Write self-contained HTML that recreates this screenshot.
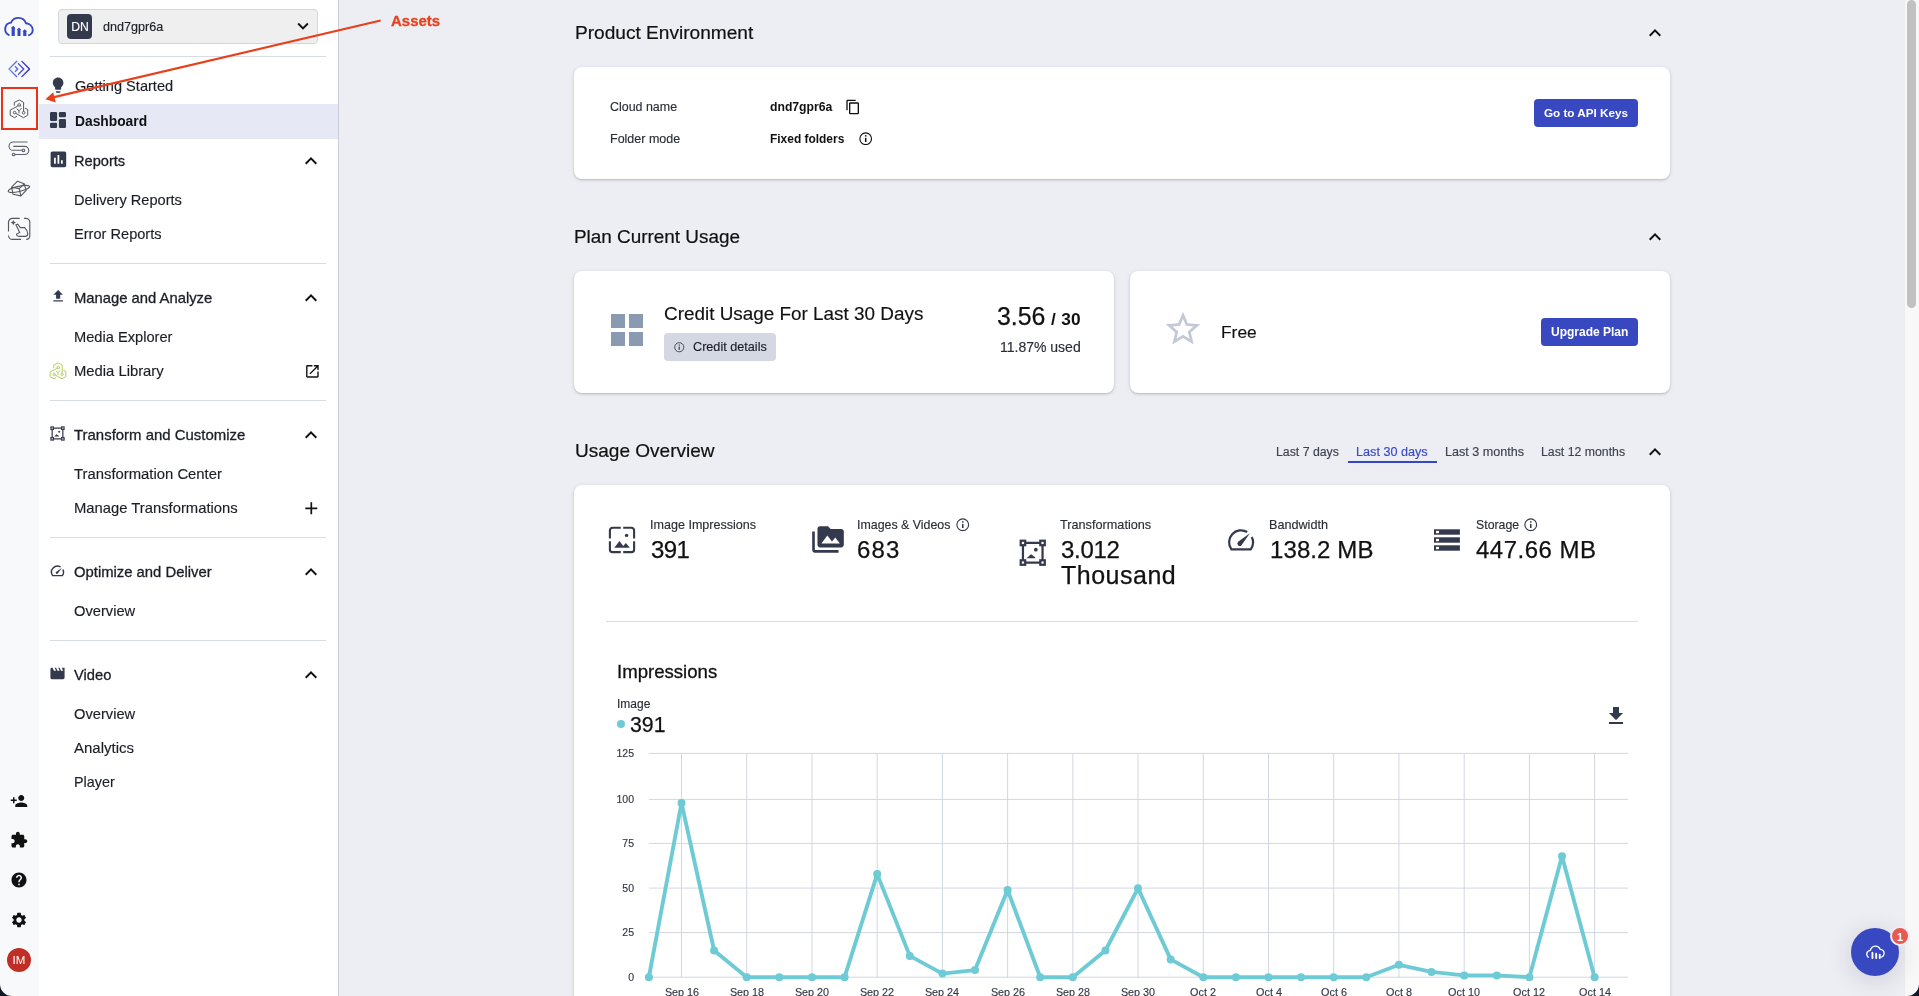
<!DOCTYPE html>
<html><head><meta charset="utf-8">
<style>
*{margin:0;padding:0;box-sizing:border-box}
html,body{width:1919px;height:996px;overflow:hidden;background:#edeef3;font-family:"Liberation Sans",sans-serif}
.t{position:absolute;line-height:1;white-space:nowrap;will-change:transform}
.i{position:absolute;display:block}
.b{position:absolute}
</style></head><body>
<div class="b" style="left:0px;top:0px;width:39px;height:996px;background:#f8f9fb"></div>
<div class="b" style="left:39px;top:0px;width:300px;height:996px;background:#fff;border-right:1px solid #c9ced9"></div>
<svg class="i" style="left:0;top:0;width:38px;height:38px" viewBox="0 0 38 38"><path d="M8.8 35C6.2 33.5 5 31 5.2 28.6 5.5 25.3 8 23 11 22.6 12.3 19.6 15.3 17.9 18.5 17.9 22 17.9 25 20.3 26 23.3 29.6 23.7 32.6 26.3 32.7 29.6 32.8 32 31.3 34.2 29 35.2" fill="none" stroke="#3448c5" stroke-width="1.9" stroke-linecap="round"/><path d="M11.6 36V28.2H10.8L13.2 25.8 15.6 28.2H14.8V36Z M17.5 36V29.9H16.7L19 27.6 21.3 29.9H20.5V36Z M23.2 36V31.6H22.4L24.8 29.3 27.2 31.6H26.4V36Z" fill="#3448c5"/></svg>
<svg class="i" style="left:8px;top:60px;width:22px;height:18px" viewBox="0 0 22 18" fill="none" stroke-width="1.3"><defs><linearGradient id="gd" gradientUnits="userSpaceOnUse" x1="1" y1="9" x2="21.5" y2="9"><stop offset="0" stop-color="#6a8be8"/><stop offset="1" stop-color="#2d1ee0"/></linearGradient></defs><path d="M9 1L1 9l8 8" stroke="url(#gd)"/><path d="M13.5 1l8 8-8 8" stroke="url(#gd)"/><path d="M10 3.3l5.7 5.7L10 14.7" stroke="url(#gd)"/><path d="M7 6.3l2.7 2.7L7 11.7" stroke="url(#gd)"/></svg>
<div class="b" style="left:1px;top:87px;width:37px;height:43px;border:2px solid #e8341c"></div>
<svg class="i" style="left:9px;top:99.2px;width:20px;height:20px" viewBox="3 3.2 20 20" fill="none" stroke="#55595f" stroke-width="1.0" stroke-linejoin="round"><path d="M8.3 9.8V6.6L13.3 4.2 17.6 6.6V15.6"/><path d="M11.7 10.2Q11.7 7.8 13.2 7.8 14.7 7.8 14.7 10.2Z"/><path d="M11.7 10.3L4.2 14.3V19.5L8.6 21.8 11 20.4"/><path d="M10.6 12.9L13 15 15.6 12.3M13 15V17.6"/><circle cx="8.6" cy="16.8" r="1.3"/><circle cx="17.6" cy="16.9" r="1.3"/><path d="M9.8 17.6L17.5 21.9 21.7 19.4V13.7L19 12.3"/></svg>
<svg class="i" style="left:4px;top:134px;width:30px;height:28px" viewBox="0 0 30 28" fill="none" stroke="#5c6068" stroke-width="1.1"><path d="M10.1 8H23.6" stroke="#a9abae" stroke-width="1.9"/><path d="M10.1 8H9.2A4.1 4.1 0 0 0 9.2 16.3H18.1"/><circle cx="19.4" cy="16.3" r="1.3"/><path d="M9.3 12.4H20.7A4.05 4.05 0 0 1 20.7 20.5H10.9"/><circle cx="9.6" cy="20.5" r="1.3"/></svg>
<svg class="i" style="left:4px;top:174px;width:30px;height:28px" viewBox="0 0 30 28" fill="none" stroke="#55595f" stroke-width="1.1" stroke-linejoin="round"><path d="M13.5 7.2L20.2 9.8 15.2 14.6 7.6 13.2z"/><path d="M7.6 13.2L9 20.2 16.9 21.9 15.2 14.6"/><path d="M20.2 9.8L22.2 16.3 16.9 21.9"/><ellipse cx="14.9" cy="14.9" rx="11" ry="2.6" transform="rotate(-13 14.9 14.9)"/></svg>
<svg class="i" style="left:4px;top:212px;width:30px;height:34px" viewBox="0 0 30 34" fill="none" stroke="#55595f" stroke-width="1.15"><path d="M15.7 6.3H8.5A4 4 0 0 0 4.5 10.3V19.5M4.5 23.5A4 4 0 0 0 8.5 27.4H17M20.1 6.3H21.8A4 4 0 0 1 25.8 10.3V23.4A4 4 0 0 1 22.2 27.4"/><path d="M9.3 8L10.2 9.7 12 10.6 10.2 11.5 9.3 13.2 8.4 11.5 6.6 10.6 8.4 9.7z" fill="#55595f" stroke="none"/><path d="M11.9 12.8L15.7 20.6 12.6 22.1C12.4 23.4 13.4 24.3 15 24.4H21.2C23.2 24.2 24 22.8 23.7 21 23.3 18.8 21.9 16.9 20.6 15.6H16.3L13.7 12.2z"/></svg>
<svg class="i" style="left:10px;top:792px;width:18px;height:18px;" viewBox="0 0 24 24" fill="#111"><path d="M15 12c2.21 0 4-1.79 4-4s-1.79-4-4-4-4 1.79-4 4 1.79 4 4 4zm-9-2V7H4v3H1v2h3v3h2v-3h3v-2H6zm9 4c-2.67 0-8 1.34-8 4v2h16v-2c0-2.66-5.33-4-8-4z"/></svg>
<svg class="i" style="left:10px;top:831px;width:18px;height:18px;" viewBox="0 0 24 24" fill="#111"><path d="M20.5 11H19V7c0-1.1-.9-2-2-2h-4V3.5C13 2.12 11.88 1 10.5 1S8 2.120 8 3.5V5H4c-1.1 0-1.99.9-1.99 2v3.8H3.5c1.49 0 2.7 1.21 2.7 2.7s-1.21 2.7-2.7 2.7H2V20c0 1.1.9 2 2 2h3.8v-1.5c0-1.49 1.21-2.7 2.7-2.7 1.49 0 2.7 1.21 2.7 2.7V22H17c1.1 0 2-.9 2-2v-4h1.5c1.38 0 2.5-1.12 2.5-2.5S21.88 11 20.5 11z"/></svg>
<svg class="i" style="left:10px;top:871px;width:18px;height:18px;" viewBox="0 0 24 24" fill="#111"><path d="M12 2C6.48 2 2 6.48 2 12s4.48 10 10 10 10-4.48 10-10S17.52 2 12 2zm1 17h-2v-2h2v2zm2.07-7.75l-.9.92C13.45 12.9 13 13.5 13 15h-2v-.5c0-1.1.45-2.1 1.17-2.830l1.24-1.26c.37-.36.59-.86.59-1.41 0-1.1-.9-2-2-2s-2 .9-2 2H8c0-2.21 1.790-4 4-4s4 1.79 4 4c0 .88-.36 1.68-.93 2.25z"/></svg>
<svg class="i" style="left:10px;top:911px;width:18px;height:18px;" viewBox="0 0 24 24" fill="#111"><path d="M19.14 12.94c.04-.3.06-.61.06-.94 0-.32-.02-.64-.07-.94l2.03-1.58c.18-.14.23-.41.12-.61l-1.92-3.32c-.12-.22-.37-.29-.59-.22l-2.39.96c-.5-.38-1.03-.7-1.62-.94l-.36-2.54c-.04-.24-.24-.41-.48-.41h-3.840c-.24 0-.43.17-.47.41l-.36 2.54c-.59.24-1.13.57-1.62.94l-2.39-.96c-.22-.08-.47 0-.59.22L2.74 8.87c-.12.21-.08.47.12.61l2.03 1.58c-.05.3-.09.63-.09.94s.02.64.07.94l-2.03 1.58c-.18.14-.23.41-.12.61l1.92 3.32c.12.22.37.29.59.22l2.39-.96c.5.38 1.03.7 1.62.94l.36 2.54c.05.24.24.41.48.41h3.84c.24 0 .44-.17.47-.41l.36-2.54c.59-.24 1.13-.56 1.62-.94l2.39.96c.22.08.47 0 .59-.22l1.92-3.32c.12-.22.07-.47-.12-.61l-2.01-1.58zM12 15.6c-1.98 0-3.6-1.62-3.6-3.6s1.62-3.6 3.6-3.6 3.6 1.62 3.6 3.6-1.62 3.6-3.6 3.6z"/></svg>
<div class="b" style="left:7px;top:948px;width:24px;height:24px;border-radius:50%;background:#bf2f25"></div>
<div class="t" style="left:19.0px;top:955px;font-size:11.5px;color:#fff;transform:translateX(-50%);">IM</div>
<div class="b" style="left:58px;top:9px;width:260px;height:35px;background:#efefef;border:1px solid #d0d6e2;border-radius:4px"></div>
<div class="b" style="left:67px;top:14px;width:25px;height:25px;background:#343a4e;border-radius:4px"></div>
<div class="t" style="left:79.5px;top:21px;font-size:12.2px;color:#fff;-webkit-text-stroke:0.15px #fff;transform:translateX(-50%);">DN</div>
<div class="t" style="left:102.5px;top:21px;font-size:12.6px;color:#1b1e26;-webkit-text-stroke:0.15px #1b1e26;">dnd7gpr6a</div>
<svg class="i" style="left:292px;top:15px;width:22px;height:22px" viewBox="0 0 24 24" fill="#111"><path d="M7.41 8.59L12 13.17l4.59-4.58L18 10l-6 6-6-6z"/></svg>
<div class="b" style="left:50px;top:56px;width:276px;height:1px;background:#d6dbe4"></div>
<div class="b" style="left:50px;top:263px;width:276px;height:1px;background:#d6dbe4"></div>
<div class="b" style="left:50px;top:400px;width:276px;height:1px;background:#d6dbe4"></div>
<div class="b" style="left:50px;top:537px;width:276px;height:1px;background:#d6dbe4"></div>
<div class="b" style="left:50px;top:640px;width:276px;height:1px;background:#d6dbe4"></div>
<div class="b" style="left:39px;top:104px;width:299px;height:35px;background:#e6e9f5"></div>
<svg class="i" style="left:48.8px;top:75.6px;width:18.24px;height:18.24px;" viewBox="0 0 24 24" fill="#343a4e"><path d="M9 21c0 .55.45 1 1 1h4c.55 0 1-.45 1-1v-1H9v1zm3-19C8.14 2 5 5.14 5 9c0 2.38 1.19 4.47 3 5.74V17c0 .55.45 1 1 1h6c.55 0 1-.45 1-1v-2.26c1.81-1.27 3-3.36 3-5.74 0-3.86-3.14-7-7-7z"/></svg>
<div class="t" style="left:74.8px;top:79px;font-size:14.6px;color:#1b1e26;-webkit-text-stroke:0.15px #1b1e26;">Getting Started</div>
<svg class="i" style="left:0;top:0;width:80px;height:140px" viewBox="0 0 80 140" fill="#343a4e"><rect x="50" y="112" width="7.1" height="8.9" rx="1.2"/><rect x="50" y="122.7" width="7.1" height="5.3" rx="1.2"/><rect x="58.9" y="119.1" width="7.1" height="8.9" rx="1.2"/><rect x="58.9" y="112" width="7.1" height="5.3" rx="1.2"/></svg>
<div class="t" style="left:74.8px;top:115px;font-size:13.8px;color:#111;font-weight:bold;">Dashboard</div>
<svg class="i" style="left:47.6px;top:148.7px;width:20.8px;height:20.8px;" viewBox="0 0 24 24" fill="#343a4e"><path d="M19 3H5c-1.1 0-2 .9-2 2v14c0 1.1.9 2 2 2h14c1.1 0 2-.9 2-2V5c0-1.1-.9-2-2-2zM9 17H7v-7h2v7zm4 0h-2V7h2v10zm4 0h-2v-4h2v4z"/></svg>
<div class="t" style="left:74.4px;top:154px;font-size:14.6px;color:#1b1e26;-webkit-text-stroke:0.3px #1b1e26;">Reports</div>
<svg class="i" style="left:303px;top:153px;width:16px;height:16px;" viewBox="4 4 16 16" fill="#111"><path d="M12 8l-6 6 1.41 1.41L12 10.83l4.59 4.58L18 14z"/></svg>
<div class="t" style="left:74.4px;top:193px;font-size:14.6px;color:#1b1e26;-webkit-text-stroke:0.15px #1b1e26;">Delivery Reports</div>
<div class="t" style="left:74.4px;top:227px;font-size:14.6px;color:#1b1e26;-webkit-text-stroke:0.15px #1b1e26;">Error Reports</div>
<svg class="i" style="left:49.8px;top:288px;width:16.3px;height:16.3px;" viewBox="0 0 24 24" fill="#343a4e"><path d="M9 16h6v-6h4l-7-7-7 7h4zm-4 2h14v2H5z"/></svg>
<div class="t" style="left:74.4px;top:291px;font-size:14.8px;color:#1b1e26;-webkit-text-stroke:0.3px #1b1e26;">Manage and Analyze</div>
<svg class="i" style="left:303px;top:290px;width:16px;height:16px;" viewBox="4 4 16 16" fill="#111"><path d="M12 8l-6 6 1.41 1.41L12 10.83l4.59 4.58L18 14z"/></svg>
<div class="t" style="left:74.4px;top:330px;font-size:14.65px;color:#1b1e26;-webkit-text-stroke:0.15px #1b1e26;">Media Explorer</div>
<svg class="i" style="left:48.9px;top:362px;width:18px;height:18px" viewBox="3 3.2 20 20" fill="none" stroke="#b3cc62" stroke-width="1.1" stroke-linejoin="round"><path d="M8.3 9.8V6.6L13.3 4.2 17.6 6.6V15.6"/><path d="M11.7 10.2Q11.7 7.8 13.2 7.8 14.7 7.8 14.7 10.2Z"/><path d="M11.7 10.3L4.2 14.3V19.5L8.6 21.8 11 20.4"/><path d="M10.6 12.9L13 15 15.6 12.3M13 15V17.6"/><circle cx="8.6" cy="16.8" r="1.3"/><circle cx="17.6" cy="16.9" r="1.3"/><path d="M9.8 17.6L17.5 21.9 21.7 19.4V13.7L19 12.3"/></svg>
<div class="t" style="left:74.4px;top:364px;font-size:14.8px;color:#1b1e26;-webkit-text-stroke:0.15px #1b1e26;">Media Library</div>
<svg class="i" style="left:303.6px;top:362.9px;width:16.8px;height:16.8px;" viewBox="0 0 24 24" fill="#111"><path d="M19 19H5V5h7V3H5c-1.11 0-2 .9-2 2v14c0 1.1.89 2 2 2h14c1.1 0 2-.9 2-2v-7h-2v7zM14 3v2h3.59l-9.83 9.83 1.41 1.41L19 6.41V10h2V3h-7z"/></svg>
<svg class="i" style="left:50px;top:426px;width:15px;height:15px" viewBox="0 0 16 16" fill="none" stroke="#343a4e" stroke-width="1.3"><rect x="1" y="1" width="2.6" height="2.6"/><rect x="12.4" y="1" width="2.6" height="2.6"/><rect x="1" y="12.4" width="2.6" height="2.6"/><rect x="12.4" y="12.4" width="2.6" height="2.6"/><path d="M3.6 2.3h8.8M3.6 13.7h8.8M2.3 3.6v8.8M13.7 3.6v8.8"/><path d="M4.4 11.2l2.6-2.3 2.2 1.6 .4.7z" fill="#343a4e" stroke="none"/><circle cx="9.8" cy="6.2" r="1.1" fill="#343a4e" stroke="none"/></svg>
<div class="t" style="left:74.4px;top:428px;font-size:14.95px;color:#1b1e26;-webkit-text-stroke:0.3px #1b1e26;">Transform and Customize</div>
<svg class="i" style="left:303px;top:427px;width:16px;height:16px;" viewBox="4 4 16 16" fill="#111"><path d="M12 8l-6 6 1.41 1.41L12 10.83l4.59 4.58L18 14z"/></svg>
<div class="t" style="left:74.4px;top:467px;font-size:14.85px;color:#1b1e26;-webkit-text-stroke:0.15px #1b1e26;">Transformation Center</div>
<div class="t" style="left:74.4px;top:501px;font-size:14.8px;color:#1b1e26;-webkit-text-stroke:0.15px #1b1e26;">Manage Transformations</div>
<svg class="i" style="left:300.7px;top:497.7px;width:20.6px;height:20.6px;" viewBox="0 0 24 24" fill="#111"><path d="M19 13h-6v6h-2v-6H5v-2h6V5h2v6h6v2z"/></svg>
<svg class="i" style="left:48.4px;top:560.9px;width:20px;height:20px" viewBox="0 0 40 40" fill="none" stroke="#343a4e" stroke-width="2.8"><path d="M25.2 12.0A11.95 11.95 0 0 0 9.4 29.3H28.7A11.95 11.95 0 0 0 29.8 17.0"/><path d="M27.9 13.3L19.5 25.2A2.4 2.4 0 1 1 16.1 21.8z" fill="#343a4e" stroke="none"/></svg>
<div class="t" style="left:74.4px;top:565px;font-size:14.83px;color:#1b1e26;-webkit-text-stroke:0.3px #1b1e26;">Optimize and Deliver</div>
<svg class="i" style="left:303px;top:564px;width:16px;height:16px;" viewBox="4 4 16 16" fill="#111"><path d="M12 8l-6 6 1.41 1.41L12 10.83l4.59 4.58L18 14z"/></svg>
<div class="t" style="left:74.4px;top:604px;font-size:14.7px;color:#1b1e26;-webkit-text-stroke:0.15px #1b1e26;">Overview</div>
<svg class="i" style="left:49.4px;top:665.2px;width:17px;height:17px;" viewBox="0 0 24 24" fill="#343a4e"><path d="M18 4l2 4h-3l-2-4h-2l2 4h-3l-2-4H8l2 4H7L5 4H4c-1.1 0-1.99.9-1.99 2L2 18c0 1.1.9 2 2 2h16c1.1 0 2-.9 2-2V4h-4z"/></svg>
<div class="t" style="left:74.4px;top:668px;font-size:14.73px;color:#1b1e26;-webkit-text-stroke:0.3px #1b1e26;">Video</div>
<svg class="i" style="left:303px;top:667px;width:16px;height:16px;" viewBox="4 4 16 16" fill="#111"><path d="M12 8l-6 6 1.41 1.41L12 10.83l4.59 4.58L18 14z"/></svg>
<div class="t" style="left:74.4px;top:707px;font-size:14.7px;color:#1b1e26;-webkit-text-stroke:0.15px #1b1e26;">Overview</div>
<div class="t" style="left:74.4px;top:740px;font-size:14.99px;color:#1b1e26;-webkit-text-stroke:0.15px #1b1e26;">Analytics</div>
<div class="t" style="left:74.4px;top:775px;font-size:14.4px;color:#1b1e26;-webkit-text-stroke:0.15px #1b1e26;">Player</div>
<div class="t" style="left:391.2px;top:13px;font-size:15px;color:#e8401c;font-weight:bold;-webkit-text-stroke:0.3px #e8401c;">Assets</div>
<svg class="i" style="left:0;top:0;width:400px;height:120px" viewBox="0 0 400 120"><line x1="380.6" y1="20.5" x2="52" y2="97.6" stroke="#e8401c" stroke-width="2.2"/><path d="M45.4 99.2L53.2 92.2 55.8 102.6z" fill="#e8401c"/></svg>
<div class="t" style="left:574.6px;top:23px;font-size:19.1px;color:#111;-webkit-text-stroke:0.2px #111;">Product Environment</div>
<svg class="i" style="left:1647px;top:25px;width:16px;height:16px;" viewBox="4 4 16 16" fill="#111"><path d="M12 8l-6 6 1.41 1.41L12 10.83l4.59 4.58L18 14z"/></svg>
<div class="b" style="left:574px;top:67px;width:1096px;height:112px;background:#fff;border-radius:8px;box-shadow:0 1px 2px rgba(0,0,0,.16),0 1px 5px rgba(0,0,0,.09)"></div>
<div class="t" style="left:609.9px;top:101px;font-size:12.45px;color:#2a2e36;-webkit-text-stroke:0.15px #2a2e36;">Cloud name</div>
<div class="t" style="left:609.9px;top:133px;font-size:12.5px;color:#2a2e36;-webkit-text-stroke:0.15px #2a2e36;">Folder mode</div>
<div class="t" style="left:769.7px;top:101px;font-size:12.2px;color:#111;font-weight:bold;">dnd7gpr6a</div>
<svg class="i" style="left:844.5px;top:99px;width:16px;height:16px;" viewBox="1 0 22 24" fill="#111"><path d="M16 1H4c-1.1 0-2 .9-2 2v14h2V3h12V1zm3 4H8c-1.1 0-2 .9-2 2v14c0 1.1.9 2 2 2h11c1.1 0 2-.9 2-2V7c0-1.1-.9-2-2-2zm0 16H8V7h11v14z"/></svg>
<div class="t" style="left:769.7px;top:134px;font-size:11.95px;color:#111;font-weight:bold;">Fixed folders</div>
<svg class="i" style="left:859.2px;top:132px;width:13.4px;height:13.4px" viewBox="0 0 14 14"><circle cx="7" cy="7" r="6.1" fill="none" stroke="#111" stroke-width="1.2"/><rect x="6.2" y="6.1" width="1.6" height="4.3" fill="#111"/><rect x="6.2" y="3.3" width="1.6" height="1.5" fill="#111"/></svg>
<div class="b" style="left:1534px;top:99px;width:104px;height:28px;background:#3848c0;border-radius:4px"></div>
<div class="t" style="left:1543.9px;top:107px;font-size:11.7px;color:#fff;font-weight:bold;">Go to API Keys</div>
<div class="t" style="left:574.2px;top:228px;font-size:18.9px;color:#111;-webkit-text-stroke:0.2px #111;">Plan Current Usage</div>
<svg class="i" style="left:1647px;top:229px;width:16px;height:16px;" viewBox="4 4 16 16" fill="#111"><path d="M12 8l-6 6 1.41 1.41L12 10.83l4.59 4.58L18 14z"/></svg>
<div class="b" style="left:574px;top:271px;width:540px;height:122px;background:#fff;border-radius:8px;box-shadow:0 1px 2px rgba(0,0,0,.16),0 1px 5px rgba(0,0,0,.09)"></div>
<div class="b" style="left:1130px;top:271px;width:540px;height:122px;background:#fff;border-radius:8px;box-shadow:0 1px 2px rgba(0,0,0,.16),0 1px 5px rgba(0,0,0,.09)"></div>
<div class="b" style="left:611px;top:314px;width:14px;height:14px;background:#8a9ab0"></div>
<div class="b" style="left:629px;top:314px;width:14px;height:14px;background:#8a9ab0"></div>
<div class="b" style="left:611px;top:332px;width:14px;height:14px;background:#8a9ab0"></div>
<div class="b" style="left:629px;top:332px;width:14px;height:14px;background:#8a9ab0"></div>
<div class="t" style="left:664.3px;top:305px;font-size:18.9px;color:#111;-webkit-text-stroke:0.15px #111;">Credit Usage For Last 30 Days</div>
<div class="b" style="left:664px;top:333px;width:112px;height:28px;background:#d3d8e2;border-radius:4px"></div>
<svg class="i" style="left:674px;top:342px;width:10.5px;height:10.5px" viewBox="0 0 14 14"><circle cx="7" cy="7" r="6.1" fill="none" stroke="#3a3f4a" stroke-width="1.2"/><rect x="6.2" y="6.1" width="1.6" height="4.3" fill="#3a3f4a"/><rect x="6.2" y="3.3" width="1.6" height="1.5" fill="#3a3f4a"/></svg>
<div class="t" style="left:693.0px;top:341px;font-size:12.65px;color:#1b1e26;-webkit-text-stroke:0.15px #1b1e26;">Credit details</div>
<div class="t" style="left:996.9px;top:304px;font-size:24.9px;color:#111;-webkit-text-stroke:0.25px #111;">3.56</div>
<div class="t" style="left:1051.0px;top:311px;font-size:17.3px;color:#111;font-weight:bold;letter-spacing:0.3px;">/ 30</div>
<div class="t" style="left:1000.0px;top:340px;font-size:14px;color:#2a2e36;-webkit-text-stroke:0.15px #2a2e36;">11.87% used</div>
<svg class="i" style="left:1164px;top:310px;width:38px;height:38px;" viewBox="1 1 22 22" fill="#c3c9d6"><path d="M22 9.24l-7.19-.62L12 2 9.19 8.63 2 9.24l5.46 4.73L5.82 21 12 17.27 18.18 21l-1.63-7.03L22 9.24zM12 15.4l-3.76 2.27 1-4.28-3.32-2.88 4.38-.38L12 6.1l1.71 4.04 4.38.38-3.32 2.88 1 4.28L12 15.4z"/></svg>
<div class="t" style="left:1220.8px;top:324px;font-size:17.4px;color:#111;-webkit-text-stroke:0.15px #111;">Free</div>
<div class="b" style="left:1541px;top:318px;width:97px;height:28px;background:#3848c0;border-radius:4px"></div>
<div class="t" style="left:1551.0px;top:326px;font-size:12px;color:#fff;font-weight:bold;">Upgrade Plan</div>
<div class="t" style="left:574.6px;top:441px;font-size:19.05px;color:#111;-webkit-text-stroke:0.2px #111;">Usage Overview</div>
<div class="t" style="left:1276.4px;top:446px;font-size:12.3px;color:#3d4250;-webkit-text-stroke:0.15px #3d4250;">Last 7 days</div>
<div class="t" style="left:1356.3px;top:446px;font-size:12.65px;color:#3a48c8;-webkit-text-stroke:0.15px #3a48c8;">Last 30 days</div>
<div class="b" style="left:1348px;top:461px;width:89px;height:2px;background:#3448c5"></div>
<div class="t" style="left:1445.0px;top:446px;font-size:12.6px;color:#3d4250;-webkit-text-stroke:0.15px #3d4250;">Last 3 months</div>
<div class="t" style="left:1540.8px;top:446px;font-size:12.3px;color:#3d4250;-webkit-text-stroke:0.15px #3d4250;">Last 12 months</div>
<svg class="i" style="left:1647px;top:444px;width:16px;height:16px;" viewBox="4 4 16 16" fill="#111"><path d="M12 8l-6 6 1.41 1.41L12 10.83l4.59 4.58L18 14z"/></svg>
<div class="b" style="left:574px;top:485px;width:1096px;height:600px;background:#fff;border-radius:8px;box-shadow:0 1px 2px rgba(0,0,0,.16),0 1px 5px rgba(0,0,0,.09)"></div>
<svg class="i" style="left:604px;top:522px;width:36px;height:36px" viewBox="0 0 36 36" fill="none" stroke="#343a4e" stroke-width="2.1"><path d="M16.8 5.8H8.6a2.7 2.7 0 0 0-2.7 2.7V16.6M19.2 5.8h8.2a2.7 2.7 0 0 1 2.7 2.7V16.6M5.9 19.2v8.2a2.7 2.7 0 0 0 2.7 2.7h8.2M30.1 19.2v8.2a2.7 2.7 0 0 1-2.7 2.7h-8.2"/><circle cx="22.6" cy="13.4" r="1.7" fill="#343a4e" stroke="none"/><path d="M10.3 25.8L15.5 19.1 19.2 23.9 21.9 21 25.8 25.8z" fill="#343a4e" stroke="none"/></svg>
<svg class="i" style="left:812px;top:525px;width:32px;height:29px;" viewBox="0 1 24 22" fill="#343a4e"><path d="M2 6H0v5h.01L0 20c0 1.1.9 2 2 2h18v-2H2V6zm20-2h-8l-2-2H6c-1.1 0-1.99.9-1.99 2L4 16c0 1.1.9 2 2 2h16c1.1 0 2-.9 2-2V6c0-1.1-.9-2-2-2zM7 15l4.5-6 3.5 4.51 2.5-3.01L21 15H7z"/></svg>
<svg class="i" style="left:1019px;top:539px;width:27.5px;height:27.5px" viewBox="0 0 16 16" fill="none" stroke="#343a4e" stroke-width="1.3"><rect x="1" y="1" width="2.6" height="2.6"/><rect x="12.4" y="1" width="2.6" height="2.6"/><rect x="1" y="12.4" width="2.6" height="2.6"/><rect x="12.4" y="12.4" width="2.6" height="2.6"/><path d="M3.6 2.3h8.8M3.6 13.7h8.8M2.3 3.6v8.8M13.7 3.6v8.8"/><path d="M4.4 11.2l2.6-2.3 2.2 1.6 .4.7z" fill="#343a4e" stroke="none"/><circle cx="9.8" cy="6.2" r="1.1" fill="#343a4e" stroke="none"/></svg>
<svg class="i" style="left:1222px;top:520px;width:40px;height:40px" viewBox="0 0 40 40" fill="none" stroke="#343a4e" stroke-width="2.2"><path d="M25.2 12.0A11.95 11.95 0 0 0 9.4 29.3H28.7A11.95 11.95 0 0 0 29.8 17.0"/><path d="M27.9 13.3L19.5 25.2A2.4 2.4 0 1 1 16.1 21.8z" fill="#343a4e" stroke="none"/></svg>
<svg class="i" style="left:1428px;top:520px;width:40px;height:40px" viewBox="0 0 40 40"><rect x="6" y="9.3" width="25.9" height="5.4" fill="#343a4e"/><rect x="8" y="10.9" width="3" height="2.3" fill="#fff"/><rect x="6" y="17.3" width="25.9" height="5.4" fill="#343a4e"/><rect x="8" y="18.900000000000002" width="3" height="2.3" fill="#fff"/><rect x="6" y="25.3" width="25.9" height="5.4" fill="#343a4e"/><rect x="8" y="26.900000000000002" width="3" height="2.3" fill="#fff"/></svg>
<div class="t" style="left:649.8px;top:519px;font-size:12.57px;color:#2a2e36;-webkit-text-stroke:0.15px #2a2e36;">Image Impressions</div>
<div class="t" style="left:650.8px;top:538px;font-size:24px;color:#111;letter-spacing:-0.6px;-webkit-text-stroke:0.25px #111;">391</div>
<div class="t" style="left:856.6px;top:519px;font-size:12.4px;color:#2a2e36;-webkit-text-stroke:0.15px #2a2e36;">Images &amp; Videos</div>
<svg class="i" style="left:956.3px;top:518px;width:13.5px;height:13.5px" viewBox="0 0 14 14"><circle cx="7" cy="7" r="6.1" fill="none" stroke="#343a4e" stroke-width="1.2"/><rect x="6.2" y="6.1" width="1.6" height="4.3" fill="#343a4e"/><rect x="6.2" y="3.3" width="1.6" height="1.5" fill="#343a4e"/></svg>
<div class="t" style="left:857.1px;top:538px;font-size:24px;color:#111;letter-spacing:1.1px;-webkit-text-stroke:0.25px #111;">683</div>
<div class="t" style="left:1060.0px;top:519px;font-size:12.69px;color:#2a2e36;-webkit-text-stroke:0.15px #2a2e36;">Transformations</div>
<div class="t" style="left:1060.5px;top:538px;font-size:24px;color:#111;letter-spacing:-0.3px;-webkit-text-stroke:0.25px #111;">3.012</div>
<div class="t" style="left:1060.5px;top:563px;font-size:25px;color:#111;letter-spacing:0.5px;-webkit-text-stroke:0.25px #111;">Thousand</div>
<div class="t" style="left:1269.4px;top:519px;font-size:12.63px;color:#2a2e36;-webkit-text-stroke:0.15px #2a2e36;">Bandwidth</div>
<div class="t" style="left:1269.7px;top:538px;font-size:24px;color:#111;letter-spacing:0.1px;-webkit-text-stroke:0.25px #111;">138.2 MB</div>
<div class="t" style="left:1475.8px;top:519px;font-size:12.33px;color:#2a2e36;-webkit-text-stroke:0.15px #2a2e36;">Storage</div>
<svg class="i" style="left:1524.2px;top:518px;width:13.5px;height:13.5px" viewBox="0 0 14 14"><circle cx="7" cy="7" r="6.1" fill="none" stroke="#343a4e" stroke-width="1.2"/><rect x="6.2" y="6.1" width="1.6" height="4.3" fill="#343a4e"/><rect x="6.2" y="3.3" width="1.6" height="1.5" fill="#343a4e"/></svg>
<div class="t" style="left:1476.3px;top:538px;font-size:24px;color:#111;letter-spacing:0.5px;-webkit-text-stroke:0.25px #111;">447.66 MB</div>
<div class="b" style="left:606px;top:621px;width:1032px;height:1px;background:#d6dbe4"></div>
<div class="t" style="left:616.6px;top:663px;font-size:18.6px;color:#111;-webkit-text-stroke:0.3px #111;">Impressions</div>
<div class="t" style="left:616.6px;top:698px;font-size:12px;color:#2a2e36;-webkit-text-stroke:0.15px #2a2e36;">Image</div>
<div class="b" style="left:617px;top:720px;width:8.4px;height:8.4px;background:#6ecbd5;border-radius:50%"></div>
<div class="t" style="left:630.1px;top:715px;font-size:21.3px;color:#111;-webkit-text-stroke:0.25px #111;">391</div>
<svg class="i" style="left:1604px;top:704px;width:24px;height:24px;" viewBox="0 0 24 24" fill="#343a4e"><path d="M19 9h-4V3H9v6H5l7 7 7-7zM5 18v2h14v-2H5z"/></svg>
<svg class="i" style="left:0;top:0;width:1919px;height:996px" viewBox="0 0 1919 996"><line x1="648.9" x2="1628" y1="977.2" y2="977.2" stroke="#d3d7e1" stroke-width="1"/><line x1="648.9" x2="1628" y1="932.6" y2="932.6" stroke="#d3d7e1" stroke-width="1"/><line x1="648.9" x2="1628" y1="888.1" y2="888.1" stroke="#d3d7e1" stroke-width="1"/><line x1="648.9" x2="1628" y1="843.4" y2="843.4" stroke="#d3d7e1" stroke-width="1"/><line x1="648.9" x2="1628" y1="799.4" y2="799.4" stroke="#d3d7e1" stroke-width="1"/><line x1="648.9" x2="1628" y1="753.4" y2="753.4" stroke="#d3d7e1" stroke-width="1"/><line x1="681.5" x2="681.5" y1="753.4" y2="977.2" stroke="#d3d7e1" stroke-width="1"/><line x1="746.7" x2="746.7" y1="753.4" y2="977.2" stroke="#d3d7e1" stroke-width="1"/><line x1="812.0" x2="812.0" y1="753.4" y2="977.2" stroke="#d3d7e1" stroke-width="1"/><line x1="877.2" x2="877.2" y1="753.4" y2="977.2" stroke="#d3d7e1" stroke-width="1"/><line x1="942.4" x2="942.4" y1="753.4" y2="977.2" stroke="#d3d7e1" stroke-width="1"/><line x1="1007.6" x2="1007.6" y1="753.4" y2="977.2" stroke="#d3d7e1" stroke-width="1"/><line x1="1072.8" x2="1072.8" y1="753.4" y2="977.2" stroke="#d3d7e1" stroke-width="1"/><line x1="1138.0" x2="1138.0" y1="753.4" y2="977.2" stroke="#d3d7e1" stroke-width="1"/><line x1="1203.3" x2="1203.3" y1="753.4" y2="977.2" stroke="#d3d7e1" stroke-width="1"/><line x1="1268.5" x2="1268.5" y1="753.4" y2="977.2" stroke="#d3d7e1" stroke-width="1"/><line x1="1333.7" x2="1333.7" y1="753.4" y2="977.2" stroke="#d3d7e1" stroke-width="1"/><line x1="1398.9" x2="1398.9" y1="753.4" y2="977.2" stroke="#d3d7e1" stroke-width="1"/><line x1="1464.2" x2="1464.2" y1="753.4" y2="977.2" stroke="#d3d7e1" stroke-width="1"/><line x1="1529.4" x2="1529.4" y1="753.4" y2="977.2" stroke="#d3d7e1" stroke-width="1"/><line x1="1594.6" x2="1594.6" y1="753.4" y2="977.2" stroke="#d3d7e1" stroke-width="1"/><polyline points="648.9,977.2 681.5,803.0 714.1,950.5 746.7,977.2 779.3,977.2 812.0,977.2 844.6,977.2 877.2,874.1 909.8,955.9 942.4,973.6 975.0,970.1 1007.6,890.1 1040.2,977.2 1072.8,977.2 1105.4,950.5 1138.0,888.3 1170.7,959.4 1203.3,977.2 1235.9,977.2 1268.5,977.2 1301.1,977.2 1333.7,977.2 1366.3,977.2 1398.9,964.8 1431.5,971.9 1464.2,975.4 1496.8,975.4 1529.4,977.2 1562.0,856.3 1594.6,977.2" fill="none" stroke="#6ecbd5" stroke-width="3.9" stroke-linejoin="round"/><circle cx="648.9" cy="977.2" r="4" fill="#6ecbd5"/><circle cx="681.5" cy="803.0" r="4" fill="#6ecbd5"/><circle cx="714.1" cy="950.5" r="4" fill="#6ecbd5"/><circle cx="746.7" cy="977.2" r="4" fill="#6ecbd5"/><circle cx="779.3" cy="977.2" r="4" fill="#6ecbd5"/><circle cx="812.0" cy="977.2" r="4" fill="#6ecbd5"/><circle cx="844.6" cy="977.2" r="4" fill="#6ecbd5"/><circle cx="877.2" cy="874.1" r="4" fill="#6ecbd5"/><circle cx="909.8" cy="955.9" r="4" fill="#6ecbd5"/><circle cx="942.4" cy="973.6" r="4" fill="#6ecbd5"/><circle cx="975.0" cy="970.1" r="4" fill="#6ecbd5"/><circle cx="1007.6" cy="890.1" r="4" fill="#6ecbd5"/><circle cx="1040.2" cy="977.2" r="4" fill="#6ecbd5"/><circle cx="1072.8" cy="977.2" r="4" fill="#6ecbd5"/><circle cx="1105.4" cy="950.5" r="4" fill="#6ecbd5"/><circle cx="1138.0" cy="888.3" r="4" fill="#6ecbd5"/><circle cx="1170.7" cy="959.4" r="4" fill="#6ecbd5"/><circle cx="1203.3" cy="977.2" r="4" fill="#6ecbd5"/><circle cx="1235.9" cy="977.2" r="4" fill="#6ecbd5"/><circle cx="1268.5" cy="977.2" r="4" fill="#6ecbd5"/><circle cx="1301.1" cy="977.2" r="4" fill="#6ecbd5"/><circle cx="1333.7" cy="977.2" r="4" fill="#6ecbd5"/><circle cx="1366.3" cy="977.2" r="4" fill="#6ecbd5"/><circle cx="1398.9" cy="964.8" r="4" fill="#6ecbd5"/><circle cx="1431.5" cy="971.9" r="4" fill="#6ecbd5"/><circle cx="1464.2" cy="975.4" r="4" fill="#6ecbd5"/><circle cx="1496.8" cy="975.4" r="4" fill="#6ecbd5"/><circle cx="1529.4" cy="977.2" r="4" fill="#6ecbd5"/><circle cx="1562.0" cy="856.3" r="4" fill="#6ecbd5"/><circle cx="1594.6" cy="977.2" r="4" fill="#6ecbd5"/></svg>
<div class="t" style="left:633.8px;top:972px;font-size:10.5px;color:#333842;-webkit-text-stroke:0.15px #333842;transform:translateX(-100%);">0</div>
<div class="t" style="left:633.8px;top:927px;font-size:10.5px;color:#333842;-webkit-text-stroke:0.15px #333842;transform:translateX(-100%);">25</div>
<div class="t" style="left:633.8px;top:883px;font-size:10.5px;color:#333842;-webkit-text-stroke:0.15px #333842;transform:translateX(-100%);">50</div>
<div class="t" style="left:633.8px;top:838px;font-size:10.5px;color:#333842;-webkit-text-stroke:0.15px #333842;transform:translateX(-100%);">75</div>
<div class="t" style="left:633.8px;top:794px;font-size:10.5px;color:#333842;-webkit-text-stroke:0.15px #333842;transform:translateX(-100%);">100</div>
<div class="t" style="left:633.8px;top:748px;font-size:10.5px;color:#333842;-webkit-text-stroke:0.15px #333842;transform:translateX(-100%);">125</div>
<div class="t" style="left:681.5px;top:987px;font-size:10.8px;color:#333842;-webkit-text-stroke:0.15px #333842;transform:translateX(-50%);">Sep 16</div>
<div class="t" style="left:746.7px;top:987px;font-size:10.8px;color:#333842;-webkit-text-stroke:0.15px #333842;transform:translateX(-50%);">Sep 18</div>
<div class="t" style="left:812.0px;top:987px;font-size:10.8px;color:#333842;-webkit-text-stroke:0.15px #333842;transform:translateX(-50%);">Sep 20</div>
<div class="t" style="left:877.2px;top:987px;font-size:10.8px;color:#333842;-webkit-text-stroke:0.15px #333842;transform:translateX(-50%);">Sep 22</div>
<div class="t" style="left:942.4px;top:987px;font-size:10.8px;color:#333842;-webkit-text-stroke:0.15px #333842;transform:translateX(-50%);">Sep 24</div>
<div class="t" style="left:1007.6px;top:987px;font-size:10.8px;color:#333842;-webkit-text-stroke:0.15px #333842;transform:translateX(-50%);">Sep 26</div>
<div class="t" style="left:1072.8px;top:987px;font-size:10.8px;color:#333842;-webkit-text-stroke:0.15px #333842;transform:translateX(-50%);">Sep 28</div>
<div class="t" style="left:1138.0px;top:987px;font-size:10.8px;color:#333842;-webkit-text-stroke:0.15px #333842;transform:translateX(-50%);">Sep 30</div>
<div class="t" style="left:1203.3px;top:987px;font-size:10.8px;color:#333842;-webkit-text-stroke:0.15px #333842;transform:translateX(-50%);">Oct 2</div>
<div class="t" style="left:1268.5px;top:987px;font-size:10.8px;color:#333842;-webkit-text-stroke:0.15px #333842;transform:translateX(-50%);">Oct 4</div>
<div class="t" style="left:1333.7px;top:987px;font-size:10.8px;color:#333842;-webkit-text-stroke:0.15px #333842;transform:translateX(-50%);">Oct 6</div>
<div class="t" style="left:1398.9px;top:987px;font-size:10.8px;color:#333842;-webkit-text-stroke:0.15px #333842;transform:translateX(-50%);">Oct 8</div>
<div class="t" style="left:1464.2px;top:987px;font-size:10.8px;color:#333842;-webkit-text-stroke:0.15px #333842;transform:translateX(-50%);">Oct 10</div>
<div class="t" style="left:1529.4px;top:987px;font-size:10.8px;color:#333842;-webkit-text-stroke:0.15px #333842;transform:translateX(-50%);">Oct 12</div>
<div class="t" style="left:1594.6px;top:987px;font-size:10.8px;color:#333842;-webkit-text-stroke:0.15px #333842;transform:translateX(-50%);">Oct 14</div>
<div class="b" style="left:1904px;top:0px;width:15px;height:996px;background:#f8f8f8;border-left:1px solid #ececec"></div>
<div class="b" style="left:1907px;top:0px;width:9px;height:308px;background:#c1c1c1;border-radius:5px"></div>
<div class="b" style="left:1851px;top:928px;width:48px;height:48px;background:#3848c0;border-radius:50%;box-shadow:0 4px 24px rgba(30,40,80,0.16)"></div>
<svg class="i" style="left:1865.5px;top:945px;width:19px;height:14px" viewBox="0 0 28 20" fill="none" stroke="#fff" stroke-width="2" stroke-linecap="round"><path d="M3.3 17.6C1.6 16.1 0.9 14.3 1.2 12.4 1.6 10 3.6 8.1 6.2 7.7 7.4 3.9 10.4 1.3 14 1.3c3.2 0 5.8 2 7 4.9 3.1.3 5.7 2.8 5.7 5.9 0 2.3-1.3 4.3-3.7 5.4"/><path d="M9.5 19V11M15 19v-6.6M20.3 19v-5" stroke-width="2.8"/></svg>
<div class="b" style="left:1890px;top:926px;width:20px;height:20px;background:#e85a50;border-radius:50%;border:2px solid #edeef3"></div>
<div class="t" style="left:1900.0px;top:932px;font-size:11px;color:#fff;font-weight:bold;transform:translateX(-50%);">1</div>
<svg class="i" style="left:0;top:984px;width:12px;height:12px" viewBox="0 0 12 12"><path d="M0 0A12 12 0 0 0 12 12H0z" fill="#111827"/></svg>
<svg class="i" style="left:1907px;top:984px;width:12px;height:12px" viewBox="0 0 12 12"><path d="M12 0A12 12 0 0 1 0 12H12z" fill="#111827"/></svg>
</body></html>
